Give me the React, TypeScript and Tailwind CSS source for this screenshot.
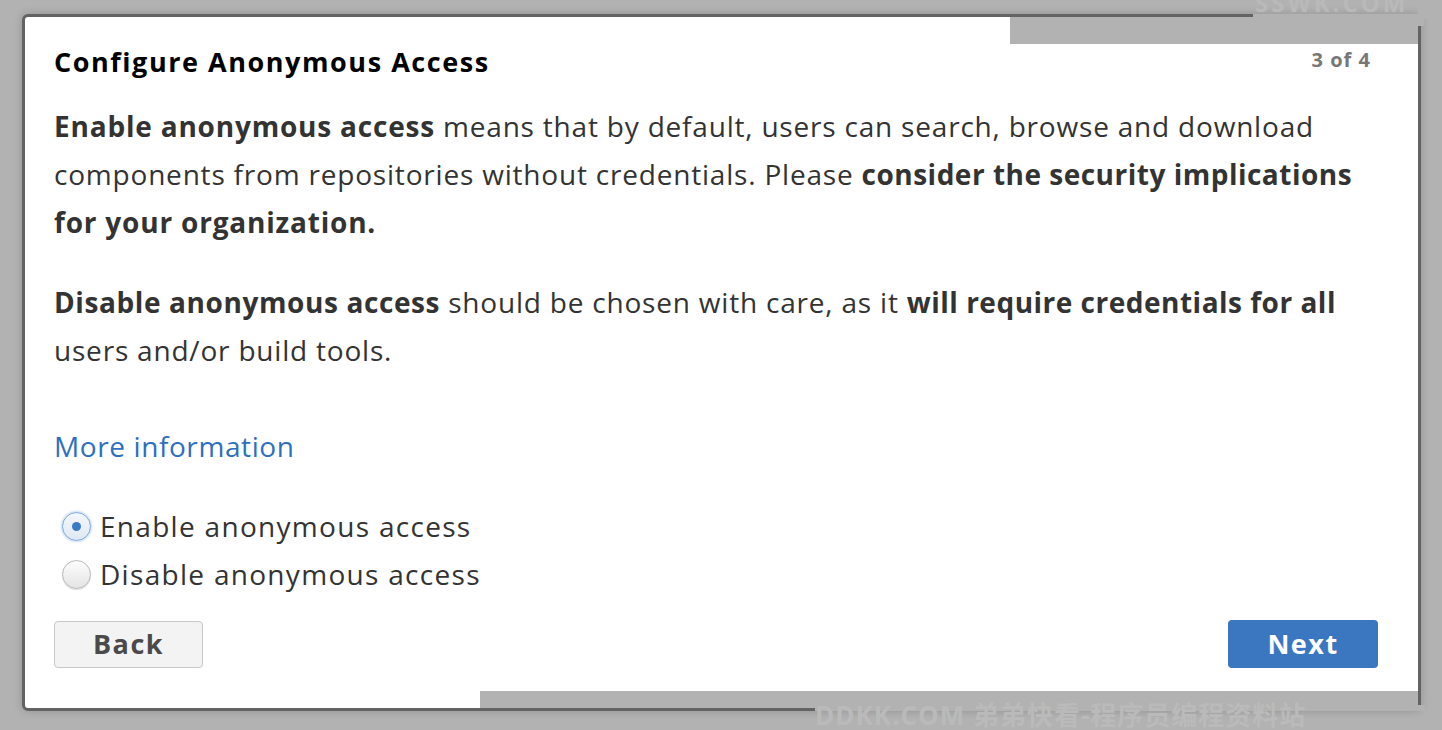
import React from "react";

export default function App() {
  const font = { fontFamily: "'Open Sans', 'Noto Sans CJK SC', sans-serif" };
  return (
    <div
      className="relative w-[1442px] h-[730px] overflow-hidden bg-[#b2b2b2] pt-[14px] pl-[22px]"
      style={font}
    >
      <div className="relative w-[1399px] h-[697px] rounded-[6px] border-[3px] border-[#636363] bg-white shadow-[0_0_8px_rgba(0,0,0,0.18)] pl-[29px] pr-[40px] pt-[27px]">
        <div className="flex items-center justify-between h-[36px]">
          <h1 className="text-[27px] font-bold text-black tracking-[1.55px]">
            Configure Anonymous Access
          </h1>
          <span className="mr-[7px] mt-[-4px] text-[20px] font-bold text-[#777] tracking-[1px]">
            3 of 4
          </span>
        </div>

        <p className="mt-[22px] text-[28px] leading-[48px] text-[#333] tracking-[0.8px] whitespace-nowrap">
          <b className="font-bold">Enable anonymous access</b> means that by
          default, users can search, browse and download
          <br />
          components from repositories without credentials. Please{" "}
          <b className="font-bold tracking-[0.5px]">
            consider the security implications
          </b>
          <br />
          <b className="font-bold">for your organization.</b>
        </p>

        <p className="mt-[32px] text-[28px] leading-[48px] text-[#333] tracking-[0.8px] whitespace-nowrap">
          <b className="font-bold tracking-[0.6px]">Disable anonymous access</b>{" "}
          should be chosen with care, as it{" "}
          <b className="font-bold tracking-[0.5px]">
            will require credentials for all
          </b>
          <br />
          users and/or build tools.
        </p>

        <div className="mt-[48px] text-[28px] leading-[48px] text-[#2f6fbf] tracking-[0.6px]">
          More information
        </div>

        <div className="mt-[32px] flex flex-col">
          <label className="flex items-center h-[48px] text-[28px] text-[#333] tracking-[1.3px]">
            <span className="ml-[8px] mr-[9px] flex h-[29px] w-[29px] items-center justify-center rounded-full border border-[#7aa5d8] bg-gradient-to-b from-[#f4f8fc] to-[#dfe8f3] shadow-[0_0_3px_#8fb7e6]">
              <span className="h-[9px] w-[9px] rounded-full bg-[#3a7bc8]" />
            </span>
            Enable anonymous access
          </label>
          <label className="flex items-center h-[48px] text-[28px] text-[#333] tracking-[1.3px]">
            <span className="ml-[8px] mr-[9px] h-[29px] w-[29px] rounded-full border border-[#b9b9b9] bg-gradient-to-b from-[#fdfdfd] to-[#e4e4e4] shadow-[0_1px_1px_rgba(0,0,0,0.15)]" />
            Disable anonymous access
          </label>
        </div>

        <div className="mt-[22px] flex items-center justify-between">
          <button className="h-[47px] w-[149px] rounded-[4px] border border-[#c8c8c8] bg-[#f3f3f3] text-[27px] font-bold text-[#4a4a4a] tracking-[1.5px]">
            Back
          </button>
          <button className="h-[48px] w-[150px] rounded-[4px] bg-[#3b76c0] text-[27px] font-bold text-white tracking-[1.5px]">
            Next
          </button>
        </div>

        <div className="absolute left-[985px] top-0 h-[27px] w-[408px] bg-[#b2b2b2]" />
        <div className="absolute left-[455px] top-[674px] h-[17px] w-[938px] bg-[#b2b2b2]" />
      </div>

      <div className="absolute left-[1253px] top-[14px] h-[4px] w-[189px] bg-[#b2b2b2]" />
      <div className="absolute left-[1418px] top-0 h-[26px] w-[6px] bg-[#b2b2b2]" />
      <div className="absolute left-[815px] top-[705px] h-[6px] w-[610px] bg-[#b2b2b2]" />
      <div className="absolute left-[815px] top-[700px] text-[26px] font-bold leading-[30px] text-[#bababa] tracking-[1px] whitespace-nowrap">
        DDKK.COM 弟弟快看-程序员编程资料站
      </div>
      <div className="absolute left-[1255px] top-[-12px] text-[24px] font-bold leading-[30px] text-[#b9b9b9] tracking-[3px] whitespace-nowrap">
        SSWK.COM
      </div>
    </div>
  );
}
